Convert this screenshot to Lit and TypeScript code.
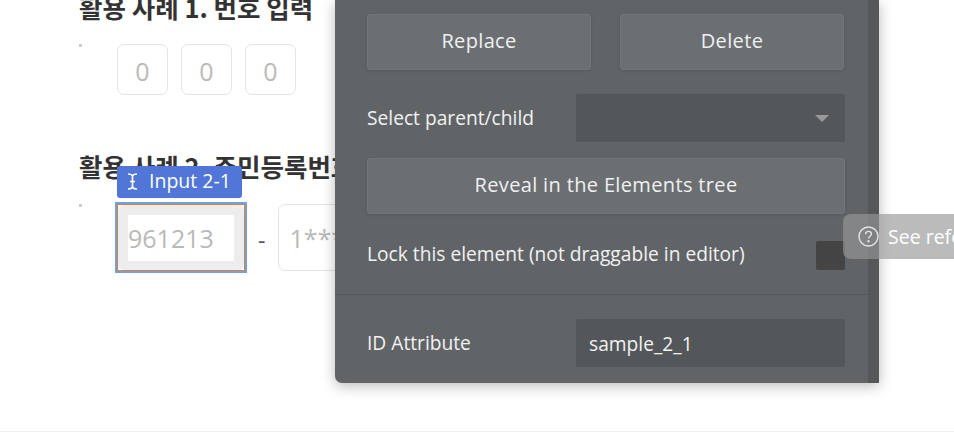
import { LitElement, html, css } from "lit";
import { customElement } from "lit/decorators.js";

@customElement("app-root")
export class AppRoot extends LitElement {
  static styles = css`
    :host {
      display: block;
      position: relative;
      width: 954px;
      height: 432px;
      overflow: hidden;
      background: #fff;
      font-family: "Open Sans", "Noto Sans CJK KR", sans-serif;
      box-sizing: border-box;
      border-bottom: 1px solid #f0f0f0;
    }
    * { box-sizing: border-box; }
    .canvas {
      display: flex;
      flex-direction: column;
      padding-left: 79px;
      margin-top: -8px;
    }
    h2 {
      margin: 0;
      height: 30px;
      line-height: 30px;
      font-family: "Noto Sans CJK KR", sans-serif;
      font-size: 25.5px;
      font-weight: 700;
      color: #333;
      white-space: nowrap;
    }
    .row { display: flex; align-items: flex-start; position: relative; }
    .dot { width: 3px; height: 3px; background: #ccc; flex: none; }
    .r1 { margin-top: 22px; }
    .r2 { margin-top: 23px; }
    .cells { display: flex; gap: 13px; margin-left: 35px; }
    .cell {
      width: 51px;
      height: 51px;
      border: 1px solid #e4e4e4;
      border-radius: 7px;
      display: flex;
      align-items: center;
      justify-content: center;
      font-size: 25px;
      color: #b9b9b9;
      padding-top: 3px;
    }
    .h2b { margin-top: 56px; }
    .selected {
      width: 128px;
      height: 67px;
      margin-left: 35px;
      flex: none;
      background: #fff;
      border: 1px solid #e0802a;
      box-shadow: 0 0 0 2px #6fa0ea;
    }
    .fill {
      width: 100%;
      height: 100%;
      padding: 10px;
      background: #ededed;
      border-radius: 6px;
    }
    .inner {
      background: #fff;
      height: 46px;
      width: 106px;
      display: flex;
      align-items: center;
      font-size: 25px;
      color: #b9b9b9;
    }
    .dash { margin: 21px 13px 0 13px; font-size: 23px; color: #555; line-height: 30px; }
    .second {
      width: 120px;
      height: 67px;
      border: 1px solid #e4e4e4;
      border-radius: 7px;
      display: flex;
      align-items: center;
      padding-left: 10px;
      font-size: 25px;
      color: #b9b9b9;
      flex: none;
    }
    .tag {
      position: absolute;
      left: 117px;
      top: 166px;
      width: 125px;
      height: 32px;
      background: #5176d8;
      border-radius: 3px;
      color: #fff;
      font-size: 19.5px;
      font-weight: 500;
      display: flex;
      align-items: center;
      gap: 11px;
      padding-left: 10px;
    }
    .tag svg { flex: none; margin-bottom: 2px; }
    .tag span { padding-bottom: 4px; }
    .panel {
      position: absolute;
      left: 335px;
      top: 0;
      width: 544px;
      height: 383px;
      background: #606467;
      border-bottom-left-radius: 7px;
      box-shadow: 0 3px 14px rgba(0, 0, 0, 0.28);
      display: flex;
      color: #f2f2f2;
      font-size: 19.2px;
    }
    .body { flex: 1; display: flex; flex-direction: column; min-width: 0; }
    .strip { width: 11px; background: #54585a; flex: none; }
    .sec { padding: 14px 23px 0 32px; display: flex; flex-direction: column; }
    .btns { display: flex; gap: 29px; padding-right: 1px; }
    .btn {
      height: 56px;
      border: 1px solid #72767a;
      border-radius: 3px;
      background: #6b6f72;
      box-shadow: 0 1px 3px rgba(0, 0, 0, 0.12);
      display: flex;
      align-items: center;
      justify-content: center;
      font-size: 20px;
      letter-spacing: 0.35px;
      padding-bottom: 4px;
      flex: 1;
      color: #f0f0f0;
    }
    .field-row {
      display: flex;
      align-items: center;
      justify-content: space-between;
      margin-top: 24px;
    }
    .field-row > span { margin-top: -2px; }
    .field {
      width: 269px;
      height: 48px;
      background: #53575a;
      border-radius: 2px;
      display: flex;
      align-items: center;
      justify-content: space-between;
      padding: 0 16px 0 13px;
      font-size: 19.2px;
    }
    .arrow {
      width: 0;
      height: 0;
      border-left: 7px solid transparent;
      border-right: 7px solid transparent;
      border-top: 7px solid #97999b;
    }
    .reveal { margin-top: 16px; flex: none; width: 100%; }
    .lock {
      display: flex;
      align-items: center;
      justify-content: space-between;
      margin-top: 27px;
      height: 29px;
    }
    .lock span { margin-top: -5px; }
    .check {
      width: 29px;
      height: 29px;
      background: #444;
      border-radius: 2px;
    }
    .divider { height: 1px; background: #56595c; margin-top: 24px; }
    .id-row { margin-top: 0; padding-top: 24px; }
    .id-row .field-row { margin-top: 0; }
    .tip {
      position: absolute;
      left: 843px;
      top: 214px;
      width: 111px;
      height: 45px;
      background: rgba(150, 150, 150, 0.65);
      border-radius: 8px 0 0 8px;
      color: #fff;
      font-size: 19.5px;
      display: flex;
      align-items: center;
      gap: 9px;
      padding-left: 15px;
      white-space: nowrap;
      overflow: hidden;
    }
    .tip svg { flex: none; }
  `;

  render() {
    return html`
      <div class="canvas">
        <h2>활용 사례 1. 번호 입력</h2>
        <div class="row r1">
          <div class="dot"></div>
          <div class="cells">
            <div class="cell">0</div>
            <div class="cell">0</div>
            <div class="cell">0</div>
          </div>
        </div>
        <h2 class="h2b">활용 사례 2. 주민등록번호 입력</h2>
        <div class="row r2">
          <div class="dot"></div>
          <div class="selected"><div class="fill"><div class="inner">961213</div></div></div>
          <div class="dash">-</div>
          <div class="second">1******</div>
        </div>
      </div>

      <div class="tag">
        <svg width="11" height="17" viewBox="0 0 11 17" fill="none" stroke="#fff" stroke-width="1.7">
          <path d="M1 1c2 0 3.5.5 4.5 1.6C6.5 1.5 8 1 10 1M5.5 2.8v11.4M1 16c2 0 3.5-.5 4.5-1.6C6.500 15.500 8 16 10 16M3 8.500h5" />
        </svg>
        <span>Input 2-1</span>
      </div>

      <div class="panel">
        <div class="body">
          <div class="sec">
            <div class="btns">
              <div class="btn">Replace</div>
              <div class="btn">Delete</div>
            </div>
            <div class="field-row">
              <span>Select parent/child</span>
              <div class="field"><span></span><div class="arrow"></div></div>
            </div>
            <div class="btn reveal">Reveal in the Elements tree</div>
            <div class="lock">
              <span>Lock this element (not draggable in editor)</span>
              <div class="check"></div>
            </div>
          </div>
          <div class="divider"></div>
          <div class="sec id-row">
            <div class="field-row">
              <span>ID Attribute</span>
              <div class="field">sample_2_1</div>
            </div>
          </div>
        </div>
        <div class="strip"></div>
      </div>

      <div class="tip">
        <svg width="21" height="21" viewBox="0 0 21 21" fill="none" stroke="#e4e4e4" stroke-width="1.4">
          <circle cx="10.500" cy="10.500" r="9.500" />
          <path d="M7.600 8.200c0-1.700 1.300-2.800 2.900-2.800s2.900 1.100 2.900 2.600c0 2.200-2.900 2.300-2.900 4.500" />
          <circle cx="10.500" cy="15.300" r="0.500" fill="#e4e4e4" />
        </svg>
        <span>See reference</span>
      </div>
    `;
  }
}
